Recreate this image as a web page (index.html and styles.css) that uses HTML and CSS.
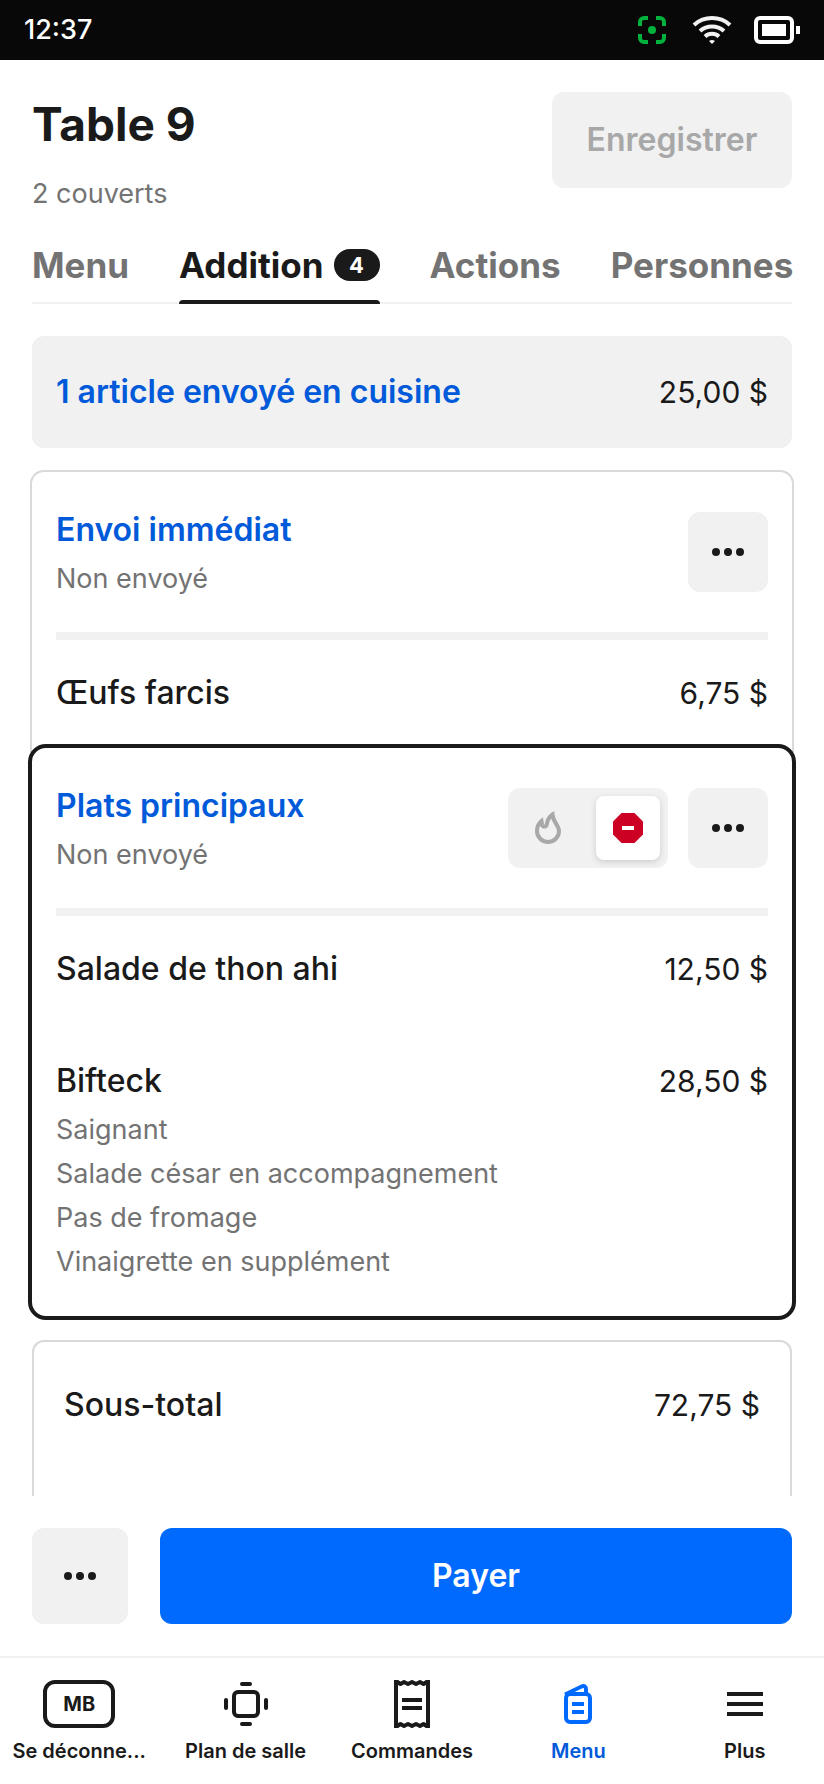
FILE: index.html
```html
<!DOCTYPE html>
<html lang="fr">
<head>
<meta charset="utf-8">
<meta name="viewport" content="width=device-width, initial-scale=1">
<title>Table 9</title>
<link rel="stylesheet" href="styles.css">
</head>
<body>
<div class="app">
  <div class="status">
    <span>12:37</span>
    <div class="status-icons">
      <svg width="28" height="28" viewBox="0 0 28 28" fill="none" stroke="#00b23b" stroke-width="4"><path d="M2 10V6a4 4 0 0 1 4-4h4M18 2h4a4 4 0 0 1 4 4v4M26 18v4a4 4 0 0 1-4 4h-4M10 26H6a4 4 0 0 1-4-4v-4"/><circle cx="14" cy="14" r="4" fill="#00b23b" stroke="none"/></svg>
      <svg width="40" height="28" viewBox="0 0 40 28" fill="none" stroke="#f2f2f2" stroke-width="4"><path d="M2 9a27 27 0 0 1 36 0M8 15a18 18 0 0 1 24 0M13 20.500a10.500 10.500 0 0 1 14 0"/><path d="M17 25q3-2 6 0l-3 3z" fill="#f2f2f2" stroke="none"/></svg>
      <svg width="46" height="28" viewBox="0 0 46 28"><rect x="2" y="2" width="36" height="24" rx="4" fill="none" stroke="#fff" stroke-width="4"/><path d="M8 8h24v12H8zM42 10h4v8h-4z" fill="#fff"/></svg>
    </div>
  </div>

  <header class="header">
    <div>
      <h1 class="title">Table 9</h1>
      <p class="covers">2 couverts</p>
    </div>
    <button class="save" type="button" disabled>Enregistrer</button>
  </header>

  <nav class="tabs">
    <button class="tab" type="button">Menu</button>
    <button class="tab tab-active" type="button">Addition <span class="badge">4</span></button>
    <button class="tab" type="button">Actions</button>
    <button class="tab" type="button">Personnes</button>
  </nav>

  <main class="content">
    <div class="sent">
      <a class="link" href="#">1 article envoyé en cuisine</a>
      <span class="price">25,00 $</span>
    </div>

    <section class="course">
      <div class="course-head">
        <div class="course-name">
          <a class="link" href="#">Envoi immédiat</a>
          <p class="note">Non envoyé</p>
        </div>
        <button class="more" type="button" aria-label="Options"><svg width="32" height="8" viewBox="0 0 32 8"><circle cx="4" cy="4" r="4"/><circle cx="16" cy="4" r="4"/><circle cx="28" cy="4" r="4"/></svg></button>
      </div>
      <div class="item">
        <div class="line"><span class="name">Œufs farcis</span><span class="price">6,75 $</span></div>
      </div>
    </section>

    <section class="course course-selected">
      <div class="course-head">
        <div class="course-name">
          <a class="link" href="#">Plats principaux</a>
          <p class="note">Non envoyé</p>
        </div>
        <div class="toggle">
          <button class="toggle-option" type="button" aria-label="Envoyer"><svg width="32" height="36" viewBox="0 0 32 36" fill="none" stroke="#a8a8a8" stroke-width="4"><path d="M20.500 4.500C16 7.500 15.500 10.500 15 13.500 14.500 17.500 10.500 17.500 10 14.500L9.500 11C6.500 13.500 5 16.500 5 21a11 11 0 0 0 22 0C27 15.500 21 12 20.500 4.500z"/></svg></button>
          <button class="toggle-option toggle-on" type="button" aria-label="Retenir" aria-pressed="true"><svg width="30" height="30" viewBox="0 0 30 30"><path d="M8.500 0h13L30 8.500v13L21.500 30h-13L0 21.500v-13z" fill="#cc0023"/><path d="M9 13h12v4H9z" fill="#fff"/></svg></button>
        </div>
        <button class="more" type="button" aria-label="Options"><svg width="32" height="8" viewBox="0 0 32 8"><circle cx="4" cy="4" r="4"/><circle cx="16" cy="4" r="4"/><circle cx="28" cy="4" r="4"/></svg></button>
      </div>
      <div class="item">
        <div class="line"><span class="name">Salade de thon ahi</span><span class="price">12,50 $</span></div>
      </div>
      <div class="item">
        <div class="line"><span class="name">Bifteck</span><span class="price">28,50 $</span></div>
        <p class="note">Saignant</p>
        <p class="note">Salade césar en accompagnement</p>
        <p class="note">Pas de fromage</p>
        <p class="note">Vinaigrette en supplément</p>
      </div>
    </section>

    <section class="totals">
      <div class="line"><span class="name">Sous-total</span><span class="price">72,75 $</span></div>
    </section>
  </main>

  <div class="actions">
    <button class="more more-large" type="button" aria-label="Options"><svg width="32" height="8" viewBox="0 0 32 8"><circle cx="4" cy="4" r="4"/><circle cx="16" cy="4" r="4"/><circle cx="28" cy="4" r="4"/></svg></button>
    <button class="pay" type="button">Payer</button>
  </div>

  <nav class="bottom">
    <a class="dest" href="#"><span class="initials">MB</span>Se déconne...</a>
    <a class="dest" href="#"><svg width="48" height="48" viewBox="0 0 48 48" fill="none" stroke="currentColor" stroke-width="4" stroke-linecap="round"><rect x="12" y="12" width="24" height="24" rx="4"/><path d="M20 4h8M20 44h8M4 20v8M44 20v8"/></svg>Plan de salle</a>
    <a class="dest" href="#"><svg width="48" height="48" viewBox="0 0 48 48" fill="none" stroke="currentColor" stroke-width="4"><path d="M8 0v48M40 0v48M14 20h20M14 28h20"/><path stroke-linejoin="round" d="M8 1l4.500 3L16 2l4 2 4-2 4 2 4-2 3.500 2L40 1M8 47l4.500-3 3.500 2 4-2 4 2 4-2 4 2 3.500-2 4.500 3"/></svg>Commandes</a>
    <a class="dest dest-active" href="#"><svg width="48" height="48" viewBox="0 0 48 48" fill="none" stroke="currentColor" stroke-width="4"><rect x="12" y="14" width="24" height="28" rx="4"/><path d="M11 14.500 27.500 6.500Q32 5 32 9v5M18 24h12M18 32h12"/></svg>Menu</a>
    <a class="dest" href="#"><svg width="48" height="48" viewBox="0 0 48 48" fill="none" stroke="currentColor" stroke-width="4"><path d="M6 14h36M6 24h36M6 34h36"/></svg>Plus</a>
  </nav>
</div>
</body>
</html>
```
FILE: styles.css
```css
* { box-sizing: border-box; }

body {
  margin: 0;
  background: #fff;
  color: #1a1a1a;
  font: 400 32px/54px Inter, "Liberation Sans", sans-serif;
}

h1, p { margin: 0; }
a { color: inherit; text-decoration: none; }
svg { display: block; flex: none; }
button {
  border: 0;
  padding: 0;
  background: none;
  color: inherit;
  font: inherit;
}

.app {
  display: flex;
  flex-direction: column;
  height: 100vh;
  overflow: hidden;
}
.app > * { flex: none; }

.status {
  display: flex;
  align-items: center;
  justify-content: space-between;
  padding: 0 24px;
  height: 60px;
  background: #080808;
  color: #fff;
  font-size: 27px;
  font-weight: 500;
}
.status-icons { display: flex; gap: 26px; align-items: center; }
.status-icons svg:last-child { margin-left: -4px; }

.header {
  display: flex;
  justify-content: space-between;
  align-items: flex-start;
  padding: 32px 32px 0;
}
.title { font-size: 46px; line-height: 64px; font-weight: 700; }
.covers {
  margin-top: 16px;
  color: #737373;
  font-size: 27px;
  line-height: 44px;
}
.save {
  width: 240px;
  height: 96px;
  border-radius: 12px;
  background: #f1f1f1;
  color: #a8a8a8;
  font-weight: 600;
}

.tabs {
  display: flex;
  gap: 50px;
  height: 88px;
  margin: 0 32px;
  box-shadow: inset 0 -2px #f1f1f1;
}
.tab {
  flex: none;
  display: flex;
  align-items: center;
  gap: 10px;
  padding-top: 10px;
  color: #737373;
  font-size: 35px;
  font-weight: 700;
}
.tab-active {
  position: relative;
  color: #1a1a1a;
}
.tab-active::after {
  content: "";
  position: absolute;
  inset: auto 0 0;
  height: 4px;
  border-radius: 4px 4px 0 0;
  background: #1a1a1a;
}
.badge {
  width: 46px;
  border-radius: 16px;
  background: #1a1a1a;
  color: #fff;
  font-size: 22px;
  line-height: 32px;
}

.content {
  flex: 1 1 0;
  min-height: 0;
  overflow: hidden;
  padding: 32px 32px 0;
}

.link { color: #005ad9; font-weight: 600; }
.note { color: #737373; font-size: 27px; line-height: 44px; }
.price { font-size: 30px; }

.sent {
  display: flex;
  align-items: center;
  justify-content: space-between;
  height: 112px;
  padding: 0 24px;
  border-radius: 12px;
  background: #f1f1f1;
}

.course {
  margin: 22px -2px 0;
  padding: 0 24px;
  border: 2px solid #d9d9d9;
  border-bottom: 0;
  border-radius: 14px 14px 0 0;
  background: #fff;
}
.course-selected {
  position: relative;
  margin: -8px -4px 0;
  border: 4px solid #1a1a1a;
  border-radius: 18px;
}
.course-head {
  display: flex;
  align-items: center;
  gap: 20px;
  height: 168px;
  border-bottom: 8px solid #f1f1f1;
}
.course-name { flex: 1; }

.more {
  display: flex;
  align-items: center;
  justify-content: center;
  width: 80px;
  height: 80px;
  border-radius: 12px;
  background: #f1f1f1;
}
.more svg { fill: #1a1a1a; }
.more-large { width: 96px; height: 96px; }

.toggle {
  display: flex;
  gap: 16px;
  padding: 8px;
  width: 160px;
  height: 80px;
  border-radius: 12px;
  background: #f1f1f1;
}
.toggle-option {
  flex: 1;
  display: flex;
  align-items: center;
  justify-content: center;
  border-radius: 8px;
}
.toggle-on {
  background: #fff;
  box-shadow: 0 2px 6px rgba(0, 0, 0, 0.15);
}

.item { padding: 26px 0 32px; }
.line { display: flex; justify-content: space-between; }
.name { font-weight: 500; }

.totals {
  min-height: 240px;
  margin-top: 20px;
  padding: 36px 30px;
  border: 2px solid #d9d9d9;
  border-radius: 12px;
}

.actions { display: flex; gap: 32px; padding: 32px; }
.pay {
  flex: 1;
  border-radius: 12px;
  background: #006aff;
  color: #fff;
  font-weight: 600;
}

.bottom {
  display: grid;
  grid-template-columns: repeat(5, 1fr);
  gap: 8px;
  padding: 22px 0 18px;
  border-top: 2px solid #f1f1f1;
}
.dest {
  display: flex;
  flex-direction: column;
  align-items: center;
  gap: 8px;
  font-size: 20px;
  line-height: 30px;
  font-weight: 600;
  white-space: nowrap;
}
.dest-active { color: #005ad9; }
.dest-active svg { color: #006aff; }
.initials {
  display: flex;
  align-items: center;
  justify-content: center;
  width: 72px;
  height: 48px;
  border: 4px solid #1a1a1a;
  border-radius: 12px;
  font-weight: 700;
}
```
